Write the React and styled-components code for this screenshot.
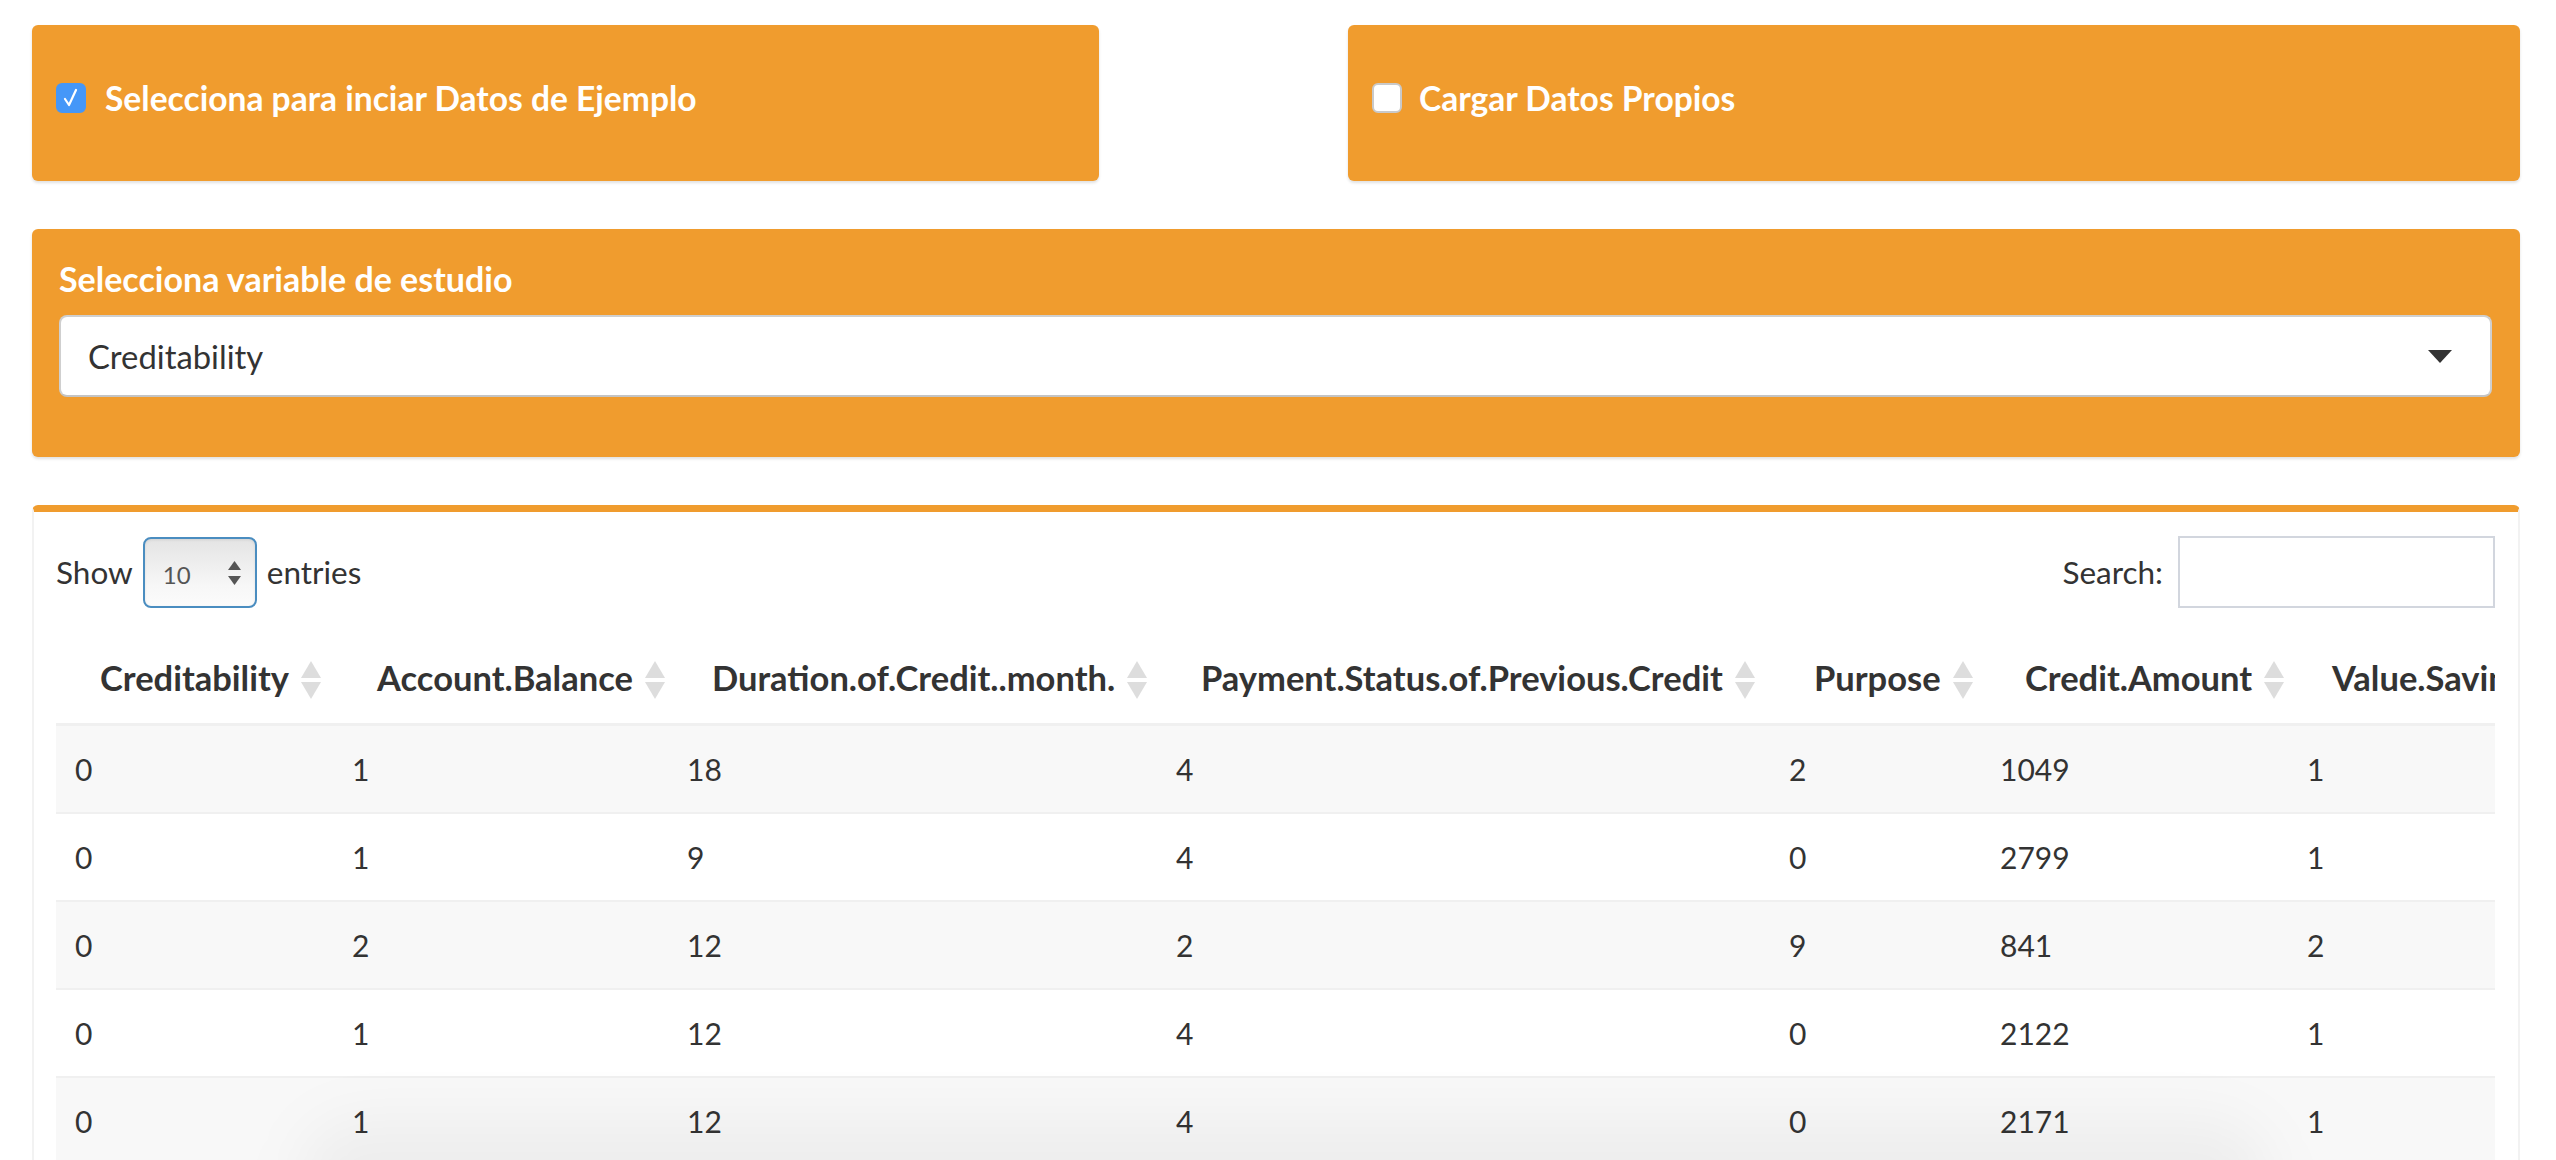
import styled, { createGlobalStyle } from 'styled-components'

const GlobalStyle = createGlobalStyle`
  html, body {
    margin: 0;
    padding: 0;
    background: #ffffff;
    overflow: hidden;
  }
  body {
    font-family: Lato, "Noto Sans", sans-serif;
    color: #333333;
  }
`

const orange = '#f09c2e'

const Page = styled.div`
  padding: 25px 36px 0 32px;
  display: flex;
  flex-direction: column;
  gap: 48px;
`

const TopRow = styled.div`
  display: grid;
  grid-template-columns: 1067px 1fr;
  column-gap: 249px;
`

const OrangeBox = styled.div`
  background: ${orange};
  border-radius: 6px;
  box-shadow: 0 2px 3px rgba(0, 0, 0, 0.12);
  color: #ffffff;
  box-sizing: border-box;
`

const CheckPanel = styled(OrangeBox)`
  height: 156px;
  padding: 58px 0 0 ${(p) => p.$inset}px;
`

const CheckLabel = styled.label`
  display: flex;
  align-items: center;
  gap: ${(p) => p.$gap}px;
  font-size: 33.6px;
  font-weight: 700;
  line-height: 30px;
  height: 30px;
`

const Tick = styled.span`
  width: 30px;
  height: 30px;
  box-sizing: border-box;
  border-radius: 6px;
  display: flex;
  align-items: center;
  justify-content: center;
  background: ${(p) => (p.$on ? '#4597f8' : '#ffffff')};
  border: 2px solid ${(p) => (p.$on ? '#4597f8' : '#c9c9c9')};
`

const VariablePanel = styled(OrangeBox)`
  height: 228px;
  padding: 27px 28px 0 27px;
`

const FieldLabel = styled.div`
  font-size: 34px;
  font-weight: 700;
  line-height: 46px;
  margin-bottom: 13px;
`

const SelectBox = styled.div`
  height: 82px;
  box-sizing: border-box;
  background: #ffffff;
  border: 2px solid #cfcfcf;
  border-bottom-color: #c4c4c4;
  border-radius: 8px;
  display: flex;
  align-items: center;
  justify-content: space-between;
  padding: 0 38px 0 27px;
  color: #333333;
  font-size: 32.8px;
`

const TablePanel = styled.div`
  border-top: 7px solid ${orange};
  border-radius: 6px 6px 0 0;
  border-left: 2px solid #f2f2f2;
  border-right: 2px solid #f2f2f2;
  background: #ffffff;
  padding: 24px 23px 0 22px;
  height: 700px;
`

const Controls = styled.div`
  display: flex;
  align-items: center;
  justify-content: space-between;
  font-size: 31.5px;
  height: 72px;
`

const Inline = styled.div`
  display: flex;
  align-items: center;
  gap: ${(p) => p.$gap}px;
`

const LengthSelect = styled.div`
  width: 114px;
  height: 71px;
  box-sizing: border-box;
  border: 2px solid #4a8dc0;
  border-radius: 8px;
  background: linear-gradient(#e4e4e4, #f7f7f7 70%, #fbfbfb);
  box-shadow: inset 0 1px 3px rgba(0, 0, 0, 0.08);
  display: flex;
  align-items: center;
  justify-content: space-between;
  padding: 4px 14px 0 18px;
  font-size: 24px;
  color: #555555;
`

const SearchInput = styled.input`
  width: 317px;
  height: 72px;
  box-sizing: border-box;
  border: 2px solid #d2d6de;
  outline: none;
  margin: 0;
`

const TableWrap = styled.div`
  margin-top: 29px;
  overflow: hidden;
`

const Table = styled.table`
  border-collapse: collapse;
  table-layout: fixed;
  width: 3032px;
`

const Th = styled.th`
  height: 81px;
  padding: 0 0 5px 44px;
  text-align: left;
  font-size: 34.5px;
  font-weight: 700;
  white-space: nowrap;
  border-bottom: 3px solid #f0f0f0;
  vertical-align: middle;
`

const SortIcon = styled.svg`
  margin-left: 12px;
  vertical-align: -8px;
`

const Row = styled.tr`
  background: ${(p) => (p.$odd ? '#f8f8f8' : '#ffffff')};
  border-top: ${(p) => (p.$first ? 'none' : '2px solid #f0f0f0')};
`

const Td = styled.td`
  height: 86px;
  padding: 0 0 0 19px;
  font-size: 30px;
  white-space: nowrap;
  vertical-align: middle;
`

const BottomShade = styled.div`
  position: fixed;
  left: 300px;
  width: 1970px;
  bottom: -80px;
  height: 120px;
  border-radius: 60px;
  background: rgba(0, 0, 0, 0.045);
  filter: blur(30px);
  pointer-events: none;
`

const columns = [
  ['Creditability', 277],
  ['Account.Balance', 335],
  ['Duration.of.Credit..month.', 489],
  ['Payment.Status.of.Previous.Credit', 613],
  ['Purpose', 211],
  ['Credit.Amount', 307],
  ['Value.Savings.Stocks', 400],
  ['Length.of.current.employment', 400],
]

const rows = [
  [0, 1, 18, 4, 2, 1049, 1, 2],
  [0, 1, 9, 4, 0, 2799, 1, 3],
  [0, 2, 12, 2, 9, 841, 2, 4],
  [0, 1, 12, 4, 0, 2122, 1, 3],
  [0, 1, 12, 4, 0, 2171, 1, 3],
  [0, 1, 10, 4, 0, 2241, 1, 2],
]

function Sort() {
  return (
    <SortIcon width="20" height="38" viewBox="0 0 20 38">
      <path d="M10 0 L20 17 L0 17 Z" fill="#dddddd" />
      <path d="M0 21 L20 21 L10 38 Z" fill="#dddddd" />
    </SortIcon>
  )
}

function Check({ on }) {
  return (
    <Tick $on={on}>
      {on && (
        <svg width="20" height="22" viewBox="0 0 20 22">
          <path d="M4 12 L8 18 L15 3" stroke="#fff" strokeWidth="2.2" fill="none" strokeLinecap="round" strokeLinejoin="round" />
        </svg>
      )}
    </Tick>
  )
}

export default function App() {
  return (
    <>
      <GlobalStyle />
      <Page>
        <TopRow>
          <CheckPanel $inset={24}>
            <CheckLabel $gap={19}>
              <Check on />
              Selecciona para inciar Datos de Ejemplo
            </CheckLabel>
          </CheckPanel>
          <CheckPanel $inset={24}>
            <CheckLabel $gap={17}>
              <Check on={false} />
              Cargar Datos Propios
            </CheckLabel>
          </CheckPanel>
        </TopRow>

        <VariablePanel>
          <FieldLabel>Selecciona variable de estudio</FieldLabel>
          <SelectBox>
            Creditability
            <svg width="24" height="13" viewBox="0 0 24 13">
              <path d="M0 0 L24 0 L12 13 Z" fill="#333" />
            </svg>
          </SelectBox>
        </VariablePanel>

        <TablePanel>
          <Controls>
            <Inline $gap={10}>
              Show
              <LengthSelect>
                10
                <svg width="13" height="26" viewBox="0 0 13 26">
                  <path d="M6.5 0 L13 9 L0 9 Z" fill="#555" />
                  <path d="M0 15 L13 15 L6.5 24 Z" fill="#555" />
                </svg>
              </LengthSelect>
              entries
            </Inline>
            <Inline $gap={15}>
              Search:
              <SearchInput type="text" />
            </Inline>
          </Controls>

          <TableWrap>
            <Table>
              <colgroup>
                {columns.map(([name, w]) => (
                  <col key={name} style={{ width: w }} />
                ))}
              </colgroup>
              <thead>
                <tr>
                  {columns.map(([name]) => (
                    <Th key={name}>
                      {name}
                      <Sort />
                    </Th>
                  ))}
                </tr>
              </thead>
              <tbody>
                {rows.map((r, i) => (
                  <Row key={i} $odd={i % 2 === 0} $first={i === 0}>
                    {r.map((v, j) => (
                      <Td key={j}>{v}</Td>
                    ))}
                  </Row>
                ))}
              </tbody>
            </Table>
          </TableWrap>
        </TablePanel>
      </Page>
      <BottomShade />
    </>
  )
}
